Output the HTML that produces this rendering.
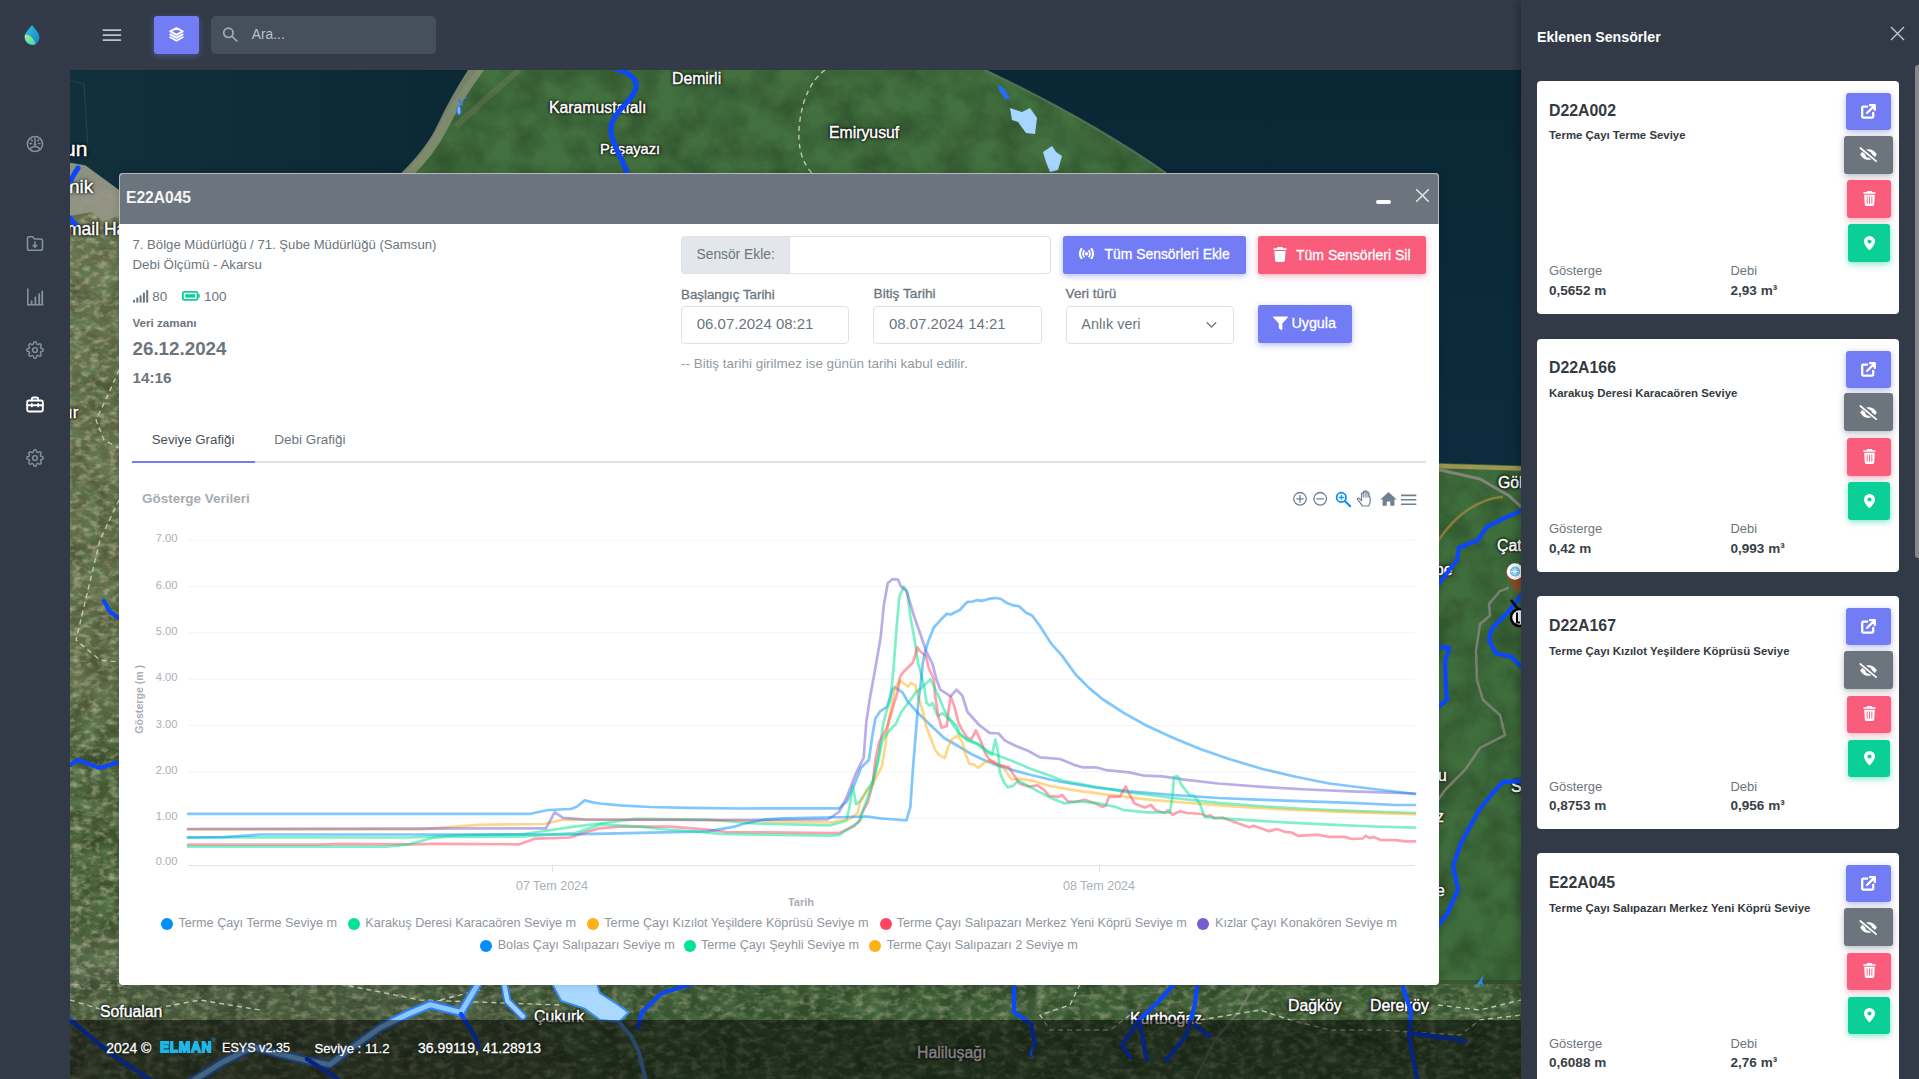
<!DOCTYPE html>
<html lang="tr">
<head>
<meta charset="utf-8">
<title>ESYS</title>
<style>
*{box-sizing:border-box;margin:0;padding:0}
html,body{width:1919px;height:1079px;overflow:hidden;background:#313a46}
body{position:relative;font-family:"Liberation Sans",sans-serif;color:#6c757d;font-size:13.3px}
.abs{position:absolute}
.t{position:absolute;white-space:nowrap;line-height:1}
#map{position:absolute;left:70px;top:70px;width:1451px;height:1009px;overflow:hidden;background:#3f6a40}
#sidebar{position:absolute;left:0;top:0;width:70px;height:1079px;background:#313a46}
#topbar{position:absolute;left:70px;top:0;width:1451px;height:70px;background:#333b48}
#footer{position:absolute;left:70px;top:1020px;width:1451px;height:59px;background:rgba(0,0,0,.5)}
#panel{position:absolute;left:1521px;top:0;width:398px;height:1079px;background:#313a46;box-shadow:-3px 0 8px rgba(0,0,0,.25)}
#modal{position:absolute;left:119px;top:173px;width:1320px;height:812px;background:#fff;border-radius:4px;overflow:hidden;box-shadow:0 0 10px rgba(0,0,0,.15)}
#mhead{position:absolute;left:0;top:0;width:1320px;height:50.6px;background:#6c757d}
.lbl{position:absolute;white-space:nowrap;color:#fff;font-weight:400;-webkit-text-stroke:.45px #fff;line-height:1;text-shadow:0 0 1.5px #000,0 0 2px #000,0 0 3px #000,0 0 4px rgba(0,0,0,.7)}
.ft{color:#fff;-webkit-text-stroke:.28px #fff;text-shadow:0 0 3px rgba(0,0,0,.9)}
.card{position:absolute;left:16px;width:362px;height:233px;background:#fff;border-radius:4px}
.cb{position:absolute;border-radius:3px;height:37.7px}
.cb svg{position:absolute;left:50%;top:50%}
.c1{left:309px;top:12px;width:45px;height:37px;background:#727cf5;box-shadow:0 2px 6px rgba(114,124,245,.5)}
.c2{left:307px;top:54.800px;width:49px;height:38px;background:#6c757d;box-shadow:0 2px 6px rgba(108,117,125,.5)}
.c3{left:310px;top:99.300px;width:44px;background:#fa5c7c;box-shadow:0 2px 6px rgba(250,92,124,.5)}
.c4{left:311px;top:143.300px;width:42px;background:#0acf97;box-shadow:0 2px 6px rgba(10,207,151,.5)}
.ct{left:12px;top:22px;font-size:15.8px;font-weight:700;color:#343a40}
.cs{left:12px;top:48px;font-size:11.5px;font-weight:700;color:#343a40}
.cl{top:183px;font-size:13px;color:#6c757d}
.cv{top:203px;font-size:13.5px;font-weight:700;color:#343a40}
.leg{position:absolute;white-space:nowrap;font-size:12.65px;color:#8f969e;line-height:1}
.dot{position:absolute;width:12px;height:12px;border-radius:50%}
.yl{position:absolute;left:30px;width:28px;text-align:right;font-size:11px;color:#adb5bd;line-height:1}
</style>
</head>
<body>
<div id="map">
<svg width="1451" height="1009" viewBox="70 70 1451 1009" style="position:absolute;left:0;top:0">
<defs>
<filter id="nz" x="0" y="0" width="100%" height="100%">
<feTurbulence type="fractalNoise" baseFrequency="0.035" numOctaves="4" seed="7" result="n"/>
<feColorMatrix type="matrix" values="0 0 0 0 0  0 0 0 0 0  0 0 0 0 0  1.6 0 0 0 -0.55"/>
</filter>
<filter id="nz2" x="0" y="0" width="100%" height="100%">
<feTurbulence type="fractalNoise" baseFrequency="0.06" numOctaves="3" seed="3"/>
<feColorMatrix type="matrix" values="0 0 0 0 0.12  0 0 0 0 0.22  0 0 0 0 0.1  2.2 0 0 0 -0.9"/>
</filter>
<linearGradient id="seaL" x1="0" y1="0" x2="1" y2="0"><stop offset="0" stop-color="#122f3c"/><stop offset="1" stop-color="#0a2935"/></linearGradient>
<linearGradient id="seaR" x1="0" y1="0" x2="0" y2="1"><stop offset="0" stop-color="#0a2734"/><stop offset="1" stop-color="#0c2c3d"/></linearGradient>
<linearGradient id="leftL" x1="0" y1="0" x2="0" y2="1"><stop offset="0" stop-color="#6c7650"/><stop offset=".3" stop-color="#647049"/><stop offset=".62" stop-color="#616c47"/><stop offset=".7" stop-color="#4a6238"/><stop offset=".9" stop-color="#466036"/><stop offset="1" stop-color="#5d6a50"/></linearGradient>
<linearGradient id="blf" x1="0" y1="0" x2="1" y2="0"><stop offset="0" stop-color="#4a5a3c"/><stop offset=".6" stop-color="#46573a" stop-opacity=".9"/><stop offset="1" stop-color="#3a5a33" stop-opacity="0"/></linearGradient>
<filter id="nz3" x="0" y="0" width="100%" height="100%"><feTurbulence type="fractalNoise" baseFrequency="0.11 0.16" numOctaves="3" seed="11"/><feColorMatrix type="matrix" values="0 0 0 0 0.66  0 0 0 0 0.6  0 0 0 0 0.42  2.4 0 0 0 -1.05"/></filter>
</defs>
<!-- land base -->
<rect x="70" y="70" width="1451" height="1009" fill="#3f6b41"/>
<!-- northern plain lighter -->
<path d="M400 70H1000L1170 175H380Z" fill="#42703f"/>
<!-- left mountain strip -->
<rect x="70" y="190" width="60" height="800" fill="url(#leftL)"/>
<!-- right strip land -->
<rect x="1430" y="455" width="91" height="570" fill="#3f6e3d"/>
<!-- bottom strip -->
<rect x="70" y="980" width="1451" height="99" fill="#3a5a33"/>
<rect x="70" y="980" width="700" height="99" fill="url(#blf)"/>
<!-- dark patches -->
<rect x="70" y="70" width="1451" height="1009" filter="url(#nz)" opacity=".28"/>
<rect x="70" y="190" width="60" height="900" filter="url(#nz2)" opacity=".75"/>
<rect x="70" y="984" width="1451" height="95" filter="url(#nz2)" opacity=".5"/>
<rect x="70" y="190" width="60" height="800" filter="url(#nz3)" opacity=".55"/>
<rect x="70" y="984" width="1451" height="95" filter="url(#nz3)" opacity=".4"/>
<!-- seas -->
<path d="M70 70H477Q452 100 438 128T400 176L119 176V190L105 179.700L85.500 165.400L70 162.800Z" fill="url(#seaL)"/>
<path d="M468 70H484Q462 100 448 128T410 178H396Q426 150 438 124T468 70Z" fill="#8a9276" opacity=".85"/><path d="M519 70Q490 95 456 126" fill="none" stroke="#8c8a64" stroke-width="6" opacity=".28"/>
<path d="M985 70H1521V465.500L1438 463V173H1166Q1090 120 985 70Z" fill="url(#seaR)"/>
<path d="M985 70Q1090 120 1166 173" fill="none" stroke="#5d7a5c" stroke-width="2" opacity=".8"/>
<path d="M1438 466L1521 468.500" stroke="#a89a55" stroke-width="4.500" opacity=".9"/>

<!-- urban area left -->
<path d="M70 162.800L85.500 165.400L105 179.700L119 190V215L104 222L92 212L70 216Z" fill="#97978a" opacity=".9"/>
<path d="M70 80L84 84L88 150" fill="none" stroke="#24404a" stroke-width="1.2"/>
<!-- roads -->
<path d="M1438 469.500L1480 479L1509 495.600L1521 506.700" fill="none" stroke="#8d8b84" stroke-width="3" opacity=".85"/>
<path d="M1438 541Q1452 520 1469 509T1503 496.700" fill="none" stroke="#a68a3a" stroke-width="2.500" opacity=".75"/>
<path d="M1509 587.800L1500 591L1489 604L1490 615.600L1480 624L1476 651L1477 680L1483 700L1500 715L1505 735L1480 748L1465 770L1445 790L1438 800" fill="none" stroke="#8f8a85" stroke-width="2.500" opacity=".75"/>
<path d="M1255 984L1240 1010L1215 1040L1195 1079" fill="none" stroke="#7d7a78" stroke-width="2.5" opacity=".7"/>
<!-- dashed boundaries -->
<g fill="none" stroke="#d9dfc8" stroke-width="1.4" stroke-dasharray="5 4" opacity=".8">
<path d="M825 70Q805 85 800 120T812 173"/>
<path d="M119 370L108 395L96 420L104 440L119 448"/>
<path d="M119 500L100 540L88 590L76 640L100 660L119 662"/>
<path d="M70 1000L120 1015L200 1000L260 1010"/>
<path d="M400 1020L440 1000L480 990"/>
<path d="M1080 984L1070 1005L1040 1015L1050 1030L1110 1030L1130 1015L1175 1015"/>
<path d="M1200 1020L1260 1010L1290 1020L1330 1030L1380 1030L1460 1035L1480 1020L1521 1015"/>
<path d="M1438 1005L1480 1010L1521 1000"/>
<path d="M340 984L420 1000L560 1005"/>
</g>
</svg>
<div class="lbl" style="left:602.0px;top:1.0px;font-size:15.8px">Demirli</div>
<div class="lbl" style="left:479.0px;top:30.0px;font-size:15.8px">Karamustafalı</div>
<div class="lbl" style="left:530.0px;top:72.0px;font-size:14.6px">Paşayazı</div>
<div class="lbl" style="left:759.0px;top:55.0px;font-size:15.8px">Emiryusuf</div>
<div class="lbl" style="left:-6.0px;top:68.0px;font-size:21.0px">un</div>
<div class="lbl" style="left:-1.0px;top:107.0px;font-size:19.0px">nik</div>
<div class="lbl" style="left:-3.0px;top:151.0px;font-size:17.5px">mail Ha</div>
<div class="lbl" style="left:-2.0px;top:334.0px;font-size:17.0px">ır</div>
<div class="lbl" style="left:30.0px;top:934.0px;font-size:15.8px">Sofualan</div>
<div class="lbl" style="left:464.0px;top:939.0px;font-size:15.8px">Çukurk</div>
<div class="lbl" style="left:847.0px;top:975.0px;font-size:15.8px">Haliluşağı</div>
<div class="lbl" style="left:1060.0px;top:941.0px;font-size:15.8px">Kurtboğaz</div>
<div class="lbl" style="left:1218.0px;top:928.0px;font-size:15.8px">Dağköy</div>
<div class="lbl" style="left:1300.0px;top:928.0px;font-size:15.8px">Dereköy</div>
<div class="lbl" style="left:1428.0px;top:405.4px;font-size:15.8px">Göl</div>
<div class="lbl" style="left:1427.0px;top:467.6px;font-size:15.8px">Çat</div>
<div class="lbl" style="left:1365.0px;top:492.0px;font-size:15.8px">pe</div>
<div class="lbl" style="left:1368.0px;top:698.0px;font-size:15.8px">u</div>
<div class="lbl" style="left:1366.0px;top:739.0px;font-size:15.8px">z</div>
<div class="lbl" style="left:1366.0px;top:813.0px;font-size:15.8px">e</div>
<div class="lbl" style="left:1441.0px;top:709.0px;font-size:15.8px">S</div>
<svg width="1451" height="1009" viewBox="70 70 1451 1009" style="position:absolute;left:0;top:0">
<!-- reservoir -->
<g fill="none" stroke-linejoin="round" stroke-linecap="round">
<path id="rv" d="M191 1082L222 1062.500L252.800 1047L276 1053L306.800 1060.600L330 1064.500L353 1047L380 1027.800L407 1014.400L430.200 1004.700L445.600 1008.600L461 1012.400L472.600 993L480.400 980" stroke="#2f7df0" stroke-width="9"/>
<path d="M191 1082L222 1062.500L252.800 1047L276 1053L306.800 1060.600L330 1064.500L353 1047L380 1027.800L407 1014.400L430.200 1004.700L445.600 1008.600L461 1012.400L472.600 993L480.400 980" stroke="#8cc8fb" stroke-width="5"/>
<path d="M503.500 980L507.400 1001L522.800 1016.300" stroke="#2f7df0" stroke-width="8"/>
<path d="M503.500 980L507.400 1001L522.800 1016.300" stroke="#9fd2fd" stroke-width="4.500"/>
<path d="M619 1022L630.800 1035.600L638.500 1051L646.200 1082" stroke="#4f8fd8" stroke-width="4"/>
</g>
<path d="M549.800 980L561.300 1001L584.500 1008.600L600 1020L619.200 1022L628.800 1012.400L615.300 1002.800L600 993L596 980Z" fill="#a9d9ff" stroke="#3a8cf0" stroke-width="2"/>
<!-- rivers -->
<g fill="none" stroke="#0c47fa" stroke-width="4.300" stroke-linecap="round" stroke-linejoin="round">
<path d="M614 68C628 72 638 78 636 88C634 100 612 112 611 128C610 142 622 156 628 176" stroke-width="5.200"/>
<path d="M70 182Q74 174 78 168" stroke-width="5"/><path d="M70 218L75 224" stroke-width="5"/>
<path d="M104 601L110 612L119 618"/>
<path d="M70 765L78 760L100 768L119 762"/>
<path d="M68 1018L110 1053L149 1079"/>
<path d="M461 1014L475 1036L478 1047"/>
<path d="M307 1059L338 1079"/>
<path d="M692 984L662 993L642 1012L638 1028"/>
<path d="M1014 984L1014 1012L1031 1024L1035 1043L1030 1055"/>
<path d="M1174 984L1159 1001L1139 1020L1122 1045L1130 1057M1139 1020L1147 1060"/>
<path d="M1197 984L1195 1005L1186 1036L1166 1060M1195 1025L1209 1036"/>
<path d="M1402 984L1411 1012L1409 1036L1417 1079M1409 1033L1440 1037L1465 1041"/>
<path d="M1438 585L1457 560L1459 547.800L1478 540L1487 526.700L1502.700 518.900L1521 511"/>
<path d="M1521 595.600L1509 611L1491.600 629L1489 640L1496 653.300L1511.600 656.700L1521 666.700"/>
<path d="M1438 646.700L1449 647.800L1445 662L1446 690L1447 700L1438 707"/>
<path d="M1521 781L1503 782L1491 795L1479 810L1461 843L1453 866L1458 890L1447 914L1438 926"/>
</g>
<!-- small lakes -->
<path d="M1010 108L1022 112L1030 108L1037 118L1035 134L1026 133L1018 122L1012 120Z" fill="#a6d6ff"/>
<path d="M1043 152L1052 146L1056 152L1062 156L1058 170L1050 172L1046 162Z" fill="#a6d6ff"/>
<path d="M997 84L1004 88L1010 98L1006 100L1000 92Z" fill="#2a6cf0"/>
<path d="M457 108q2-5 3.500 0t-1 6.500-2.500-6.500z" fill="#7fb6ff" stroke="#2a6cf5" stroke-width="1"/><path d="M459 98l4 6 -1 2-4-5zM464 95l3 3-1 1.500z" fill="#3a7cf5"/>
<path d="M1480 980l4 -6 -2 8 3 6 -4 -4 -5 2z" fill="#2a8cf0"/>
<path d="M1030 1052l3-6-1 8 2 5-4-4z" fill="#2a8cf0"/>
<!-- markers -->
<path d="M1505.300 574a9.800 9.800 0 1 1 19.400 2l-7.700 18.400z" fill="#8a4a26"/><circle cx="1515" cy="571.500" r="8.300" fill="#fff"/><circle cx="1515" cy="571.500" r="5" fill="#5cc0ee"/><path d="M1511 571.500h8M1515 567.500v8M1512.200 568.700l5.600 5.600M1517.800 568.700l-5.600 5.600" stroke="#fff" stroke-width="1"/>
<path d="M1511 600l7 9" stroke="#000" stroke-width="2.500"/><circle cx="1519.500" cy="617.500" r="8.500" fill="#fff" stroke="#000" stroke-width="2.600"/><path d="M1517 612.500v10h3" fill="none" stroke="#000" stroke-width="2"/>
</svg>
</div>
<div id="topbar">
<svg class="abs" style="left:32px;top:28px" width="20" height="14" viewBox="0 0 20 14"><path d="M0.7 2h18.4M0.7 7.1h18.4M0.7 12.2h18.4" stroke="#b9c0cb" stroke-width="1.75"/></svg>
<div class="abs" style="left:84px;top:16px;width:45px;height:38px;background:#727cf5;border-radius:3px;box-shadow:0 2px 6px rgba(114,124,245,.4)">
<svg class="abs" style="left:14px;top:9.500px" width="17" height="17" viewBox="0 0 24 24" fill="none" stroke="#fff" stroke-width="2.700" stroke-linejoin="round" stroke-linecap="round"><path d="M12 2.800L3.200 7.700l8.800 4.900 8.800-4.900z"/><path d="M3.200 11.900l8.800 4.900 8.800-4.900"/><path d="M3.200 15.900l8.800 4.900 8.800-4.900"/></svg>
</div>
<div class="abs" style="left:141px;top:16px;width:225px;height:38px;background:#46505c;border-radius:5px">
<svg class="abs" style="left:11px;top:10px" width="17" height="17" viewBox="0 0 17 17" fill="none" stroke="#a3abb6" stroke-width="1.700" stroke-linecap="round"><circle cx="6.400" cy="6.800" r="4.700"/><path d="M10 10.400L14.800 15"/></svg>
<div class="t" style="left:40.800px;top:12.300px;font-size:13.800px;color:#bac1cb">Ara...</div>
</div>
</div>
<div id="sidebar">
<svg class="abs" style="left:23px;top:24px" width="18" height="22" viewBox="0 0 18 22"><defs><linearGradient id="dg" x1="0" y1="0" x2="1" y2="1"><stop offset="0" stop-color="#35c3e6"/><stop offset="1" stop-color="#1581bd"/></linearGradient><linearGradient id="lg" x1="0" y1="0" x2="1" y2="1"><stop offset="0" stop-color="#b5f08a"/><stop offset="1" stop-color="#39d6b0"/></linearGradient></defs><path d="M9 1C12 5 16.500 8.500 16.500 13.500A7.500 7.500 0 0 1 9 21 7.500 7.500 0 0 1 1.500 13.500C1.500 8.500 6 5 9 1z" fill="url(#dg)"/><path d="M2 10.500C6.500 11 11 13.500 12.500 20.500 6 21.500 1 17.500 2 10.500z" fill="url(#lg)"/></svg>
<!-- dashboard -->
<svg class="abs" style="left:26px;top:134.500px" width="18" height="18" viewBox="0 0 18 18" fill="none" stroke="#8391a2" stroke-width="1.5" stroke-linecap="round"><circle cx="9" cy="9" r="7.600"/><path d="M9 3.200v5.800M4 8.500h1.500M12.500 8.500H14M5.300 4.800l1 1M12.700 4.800l-1 1M4.200 13.600Q9 9.500 13.800 13.600"/><circle cx="9" cy="9.500" r="1.300" fill="#8391a2" stroke="none"/></svg>
<!-- folder download -->
<svg class="abs" style="left:26px;top:235px" width="18" height="17" viewBox="0 0 18 17" fill="none" stroke="#8391a2" stroke-width="1.600" stroke-linejoin="round" stroke-linecap="round"><path d="M1.500 3.200a1.500 1.500 0 0 1 1.500-1.500h3.600l2 2.300h6.400a1.500 1.500 0 0 1 1.500 1.500v8.300a1.500 1.500 0 0 1-1.500 1.500H3a1.500 1.500 0 0 1-1.500-1.500z"/><path d="M9 7v5M7 10.200l2 2 2-2" stroke-width="1.500"/></svg>
<!-- bar chart -->
<svg class="abs" style="left:26px;top:288px" width="18" height="18" viewBox="0 0 18 18" fill="none" stroke="#8391a2" stroke-width="1.600" stroke-linecap="round"><path d="M1.800 1v15.800H17"/><path d="M5.600 13.200v3M9.400 9.500v6.700M13.200 6.200v10M16.200 3.500v12.500" stroke-width="1.800"/></svg>
<!-- gear -->
<svg class="abs" style="left:26px;top:341px" width="18" height="18" viewBox="0 0 24 24" fill="none" stroke="#8391a2" stroke-width="1.900" stroke-linejoin="round"><circle cx="12" cy="12" r="3.200"/><path d="M19.400 15a1.650 1.650 0 0 0 .33 1.820l.06.060a2 2 0 1 1-2.830 2.830l-.06-.06a1.650 1.650 0 0 0-1.820-.33 1.650 1.650 0 0 0-1 1.510V21a2 2 0 0 1-4 0v-.09A1.650 1.650 0 0 0 9 19.400a1.650 1.650 0 0 0-1.820.33l-.06.060a2 2 0 1 1-2.830-2.830l.06-.06a1.650 1.650 0 0 0 .33-1.820 1.650 1.650 0 0 0-1.510-1H3a2 2 0 0 1 0-4h.09A1.650 1.650 0 0 0 4.600 9a1.650 1.650 0 0 0-.33-1.820l-.06-.06a2 2 0 1 1 2.830-2.830l.06.060a1.650 1.650 0 0 0 1.820.33H9a1.650 1.650 0 0 0 1-1.510V3a2 2 0 0 1 4 0v.09a1.650 1.650 0 0 0 1 1.510 1.650 1.650 0 0 0 1.820-.33l.06-.06a2 2 0 1 1 2.830 2.830l-.06.060a1.650 1.650 0 0 0-.33 1.820V9a1.650 1.650 0 0 0 1.510 1H21a2 2 0 0 1 0 4h-.09a1.650 1.650 0 0 0-1.510 1z"/></svg>
<!-- toolbox -->
<svg class="abs" style="left:26px;top:395.500px" width="18" height="17" viewBox="0 0 18 17" fill="none" stroke="#fff" stroke-width="1.900" stroke-linejoin="round" stroke-linecap="round"><path d="M5.800 4.500V3a1.500 1.500 0 0 1 1.500-1.500h3.400A1.500 1.500 0 0 1 12.200 3v1.500"/><rect x="1.200" y="4.500" width="15.600" height="11" rx="1.800"/><path d="M1.200 9.200h15.600M5.800 8v2.400M12.200 8v2.400"/></svg>
<!-- gear 2 -->
<svg class="abs" style="left:26px;top:449px" width="18" height="18" viewBox="0 0 24 24" fill="none" stroke="#8391a2" stroke-width="1.900" stroke-linejoin="round"><circle cx="12" cy="12" r="3.200"/><path d="M19.400 15a1.650 1.650 0 0 0 .33 1.820l.06.060a2 2 0 1 1-2.830 2.830l-.06-.06a1.650 1.650 0 0 0-1.820-.33 1.650 1.650 0 0 0-1 1.510V21a2 2 0 0 1-4 0v-.09A1.650 1.650 0 0 0 9 19.400a1.650 1.650 0 0 0-1.820.33l-.06.060a2 2 0 1 1-2.830-2.830l.06-.06a1.650 1.650 0 0 0 .33-1.820 1.650 1.650 0 0 0-1.510-1H3a2 2 0 0 1 0-4h.09A1.650 1.650 0 0 0 4.600 9a1.650 1.650 0 0 0-.33-1.820l-.06-.06a2 2 0 1 1 2.830-2.830l.06.060a1.650 1.650 0 0 0 1.820.33H9a1.650 1.650 0 0 0 1-1.510V3a2 2 0 0 1 4 0v.09a1.650 1.650 0 0 0 1 1.510 1.650 1.650 0 0 0 1.820-.33l.06-.06a2 2 0 1 1 2.830 2.830l-.06.060a1.650 1.650 0 0 0-.33 1.820V9a1.650 1.650 0 0 0 1.510 1H21a2 2 0 0 1 0 4h-.09a1.650 1.650 0 0 0-1.510 1z"/></svg>
</div>
<div id="footer">
<div class="t ft" style="left:36.300px;top:21.800px;font-size:13.900px">2024 ©</div>
<div class="t" style="left:90px;top:19px;font-size:15.500px;font-weight:700;color:#1fb6e8;letter-spacing:.8px;-webkit-text-stroke:1.800px #1fb6e8;transform:scaleX(.88);transform-origin:left">ELMAN</div>
<div class="t" style="left:141.500px;top:17px;font-size:6px;color:#1fb6e8">®</div>
<div class="t ft" style="left:152px;top:22.400px;font-size:12.600px">ESYS v2.35</div>
<div class="t ft" style="left:244.500px;top:22.200px;font-size:13.150px">Seviye : 11.2</div>
<div class="t ft" style="left:348px;top:21.800px;font-size:13.950px">36.99119, 41.28913</div>
</div>
<div id="modal">
<div id="mhead"></div>
<div class="t" style="left:7.0px;top:17.4px;font-size:15.6px;font-weight:700;color:#f4f5f6;">E22A045</div>
<div class="abs" style="left:1257.0px;top:26.6px;width:15.2px;height:4.8px;background:#fff;border-radius:2px"></div>
<svg class="abs" style="left:1296px;top:15px" width="15" height="15" viewBox="0 0 15 15"><path d="M1.200 1.200L13.800 13.800M13.800 1.200L1.200 13.800" stroke="#e4e7ea" stroke-width="1.500"/></svg>
<div class="t" style="left:13.5px;top:64.8px;font-size:13.15px;font-weight:400;color:#6c757d;">7. Bölge Müdürlüğü / 71. Şube Müdürlüğü (Samsun)</div>
<div class="t" style="left:13.5px;top:84.9px;font-size:13.3px;font-weight:400;color:#6c757d;">Debi Ölçümü - Akarsu</div>
<svg class="abs" style="left:13.5px;top:116.5px" width="16" height="13" viewBox="0 0 16 13"><g fill="#6c757d"><rect x="0" y="9.800" width="2" height="3" rx=".8"/><rect x="3.300" y="7.600" width="2" height="5.200" rx=".8"/><rect x="6.600" y="5.200" width="2" height="7.600" rx=".8"/><rect x="9.900" y="2.600" width="2" height="10.200" rx=".8"/><rect x="13.200" y="0" width="2" height="12.800" rx=".8"/></g></svg>
<div class="t" style="left:33.3px;top:116.8px;font-size:13.5px;font-weight:400;color:#6c757d;">80</div>
<svg class="abs" style="left:63.4px;top:118.2px" width="18" height="10" viewBox="0 0 18 10"><rect x=".9" y=".9" width="14.600" height="8" rx="1.600" fill="none" stroke="#0acf97" stroke-width="1.800"/><rect x="3.200" y="3.200" width="10" height="3.400" fill="#0acf97"/><rect x="16" y="3" width="1.700" height="3.800" rx=".6" fill="#0acf97"/></svg>
<div class="t" style="left:85.0px;top:116.8px;font-size:13.5px;font-weight:400;color:#6c757d;">100</div>
<div class="t" style="left:13.5px;top:144.2px;font-size:11.63px;font-weight:700;color:#6c757d;">Veri zamanı</div>
<div class="t" style="left:13.5px;top:167.0px;font-size:18.8px;font-weight:700;color:#6c757d;">26.12.2024</div>
<div class="t" style="left:13.5px;top:196.9px;font-size:15.25px;font-weight:700;color:#6c757d;">14:16</div>
<div class="abs" style="left:562.0px;top:63.0px;width:370.0px;height:38.0px;border:1px solid #dee2e6;border-radius:4px;background:#fff"></div>
<div class="abs" style="left:562.0px;top:63.0px;width:109.0px;height:38.0px;background:#e3e7eb;border:1px solid #dee2e6;border-radius:4px 0 0 4px"></div>
<div class="t" style="left:577.5px;top:74.6px;font-size:13.81px;font-weight:400;color:#6c757d;">Sensör Ekle:</div>
<div class="abs" style="left:944.0px;top:63.0px;width:183.0px;height:38.0px;background:#727cf5;border-radius:2.500px;box-shadow:0 2px 6px rgba(114,124,245,.5)"></div>
<svg class="abs" style="left:959px;top:75px" width="17" height="11.400" viewBox="0 0 17 11.400" fill="none" stroke="#fff" stroke-linecap="round"><circle cx="8.500" cy="5.700" r="1.750" fill="#fff" stroke="none"/><path d="M3.400 1Q.6 5.700 3.400 10.400M13.600 1Q16.400 5.700 13.600 10.400" stroke-width="2.200"/><path d="M6 2.700Q4.200 5.700 6 8.700M11 2.700Q12.800 5.700 11 8.700" stroke-width="1.700"/></svg>
<div class="t" style="left:985.5px;top:74.8px;font-size:13.92px;font-weight:400;color:#fff;-webkit-text-stroke:.3px #fff">Tüm Sensörleri Ekle</div>
<div class="abs" style="left:1139.0px;top:63.0px;width:168.0px;height:38.0px;background:#fa5c7c;border-radius:2.500px;box-shadow:0 2px 6px rgba(250,92,124,.5)"></div>
<svg class="abs" style="left:1153.5px;top:73.5px" width="14" height="15" viewBox="0 0 14 15" fill="#fff"><path d="M4.500 0h5l.8 1.300H13.500v1.700H.5V1.300H3.700z"/><path d="M1.400 4h11.200l-.7 9.600a1.500 1.500 0 0 1-1.500 1.400H3.600a1.500 1.500 0 0 1-1.500-1.400z"/></svg>
<div class="t" style="left:1177.0px;top:74.7px;font-size:14.03px;font-weight:400;color:#fff;-webkit-text-stroke:.3px #fff">Tüm Sensörleri Sil</div>
<div class="t" style="left:562.0px;top:114.5px;font-size:13.32px;font-weight:400;color:#6c757d;-webkit-text-stroke:.3px #6c757d">Başlangıç Tarihi</div>
<div class="t" style="left:754.6px;top:114.2px;font-size:13.68px;font-weight:400;color:#6c757d;-webkit-text-stroke:.3px #6c757d">Bitiş Tarihi</div>
<div class="t" style="left:946.6px;top:114.3px;font-size:13.6px;font-weight:400;color:#6c757d;-webkit-text-stroke:.3px #6c757d">Veri türü</div>
<div class="abs" style="left:562.0px;top:133.0px;width:167.5px;height:38.0px;border:1px solid #dee2e6;border-radius:4px;background:#fff"></div>
<div class="abs" style="left:754.0px;top:133.0px;width:169.0px;height:38.0px;border:1px solid #dee2e6;border-radius:4px;background:#fff"></div>
<div class="abs" style="left:947.0px;top:133.0px;width:168.0px;height:38.0px;border:1px solid #dee2e6;border-radius:4px;background:#fff"></div>
<div class="t" style="left:577.7px;top:143.1px;font-size:15.0px;font-weight:400;color:#6c757d;">06.07.2024 08:21</div>
<div class="t" style="left:769.9px;top:143.1px;font-size:15.0px;font-weight:400;color:#6c757d;">08.07.2024 14:21</div>
<div class="t" style="left:962.3px;top:143.6px;font-size:14.4px;font-weight:400;color:#6c757d;">Anlık veri</div>
<svg class="abs" style="left:1087px;top:147.5px" width="11" height="8" viewBox="0 0 11 8" fill="none" stroke="#6c757d" stroke-width="1.300" stroke-linecap="round" stroke-linejoin="round"><path d="M1.200 1.800L5.500 6l4.300-4.200"/></svg>
<div class="abs" style="left:1139.0px;top:132.0px;width:94.0px;height:38.0px;background:#727cf5;border-radius:2.500px;box-shadow:0 2px 6px rgba(114,124,245,.5)"></div>
<svg class="abs" style="left:1153.5px;top:143px" width="15" height="15" viewBox="0 0 15 15" fill="#fff"><path d="M.6.400h13.800c.5 0 .8.600.4 1L9.300 7.600v6c0 .5-.6.800-1 .5l-2.200-1.600a.7.700 0 0 1-.300-.5V7.600L.2 1.400C-.2 1 .1.400.6.400z"/></svg>
<div class="t" style="left:1172.4px;top:143.4px;font-size:14.33px;font-weight:400;color:#fff;-webkit-text-stroke:.3px #fff">Uygula</div>
<div class="t" style="left:562.0px;top:184.2px;font-size:13.45px;font-weight:400;color:#919aa3;">-- Bitiş tarihi girilmez ise günün tarihi kabul edilir.</div>
<div class="abs" style="left:13.0px;top:287.5px;width:1294.0px;height:2.0px;background:#dee2e6"></div>
<div class="abs" style="left:13.0px;top:287.5px;width:122.7px;height:2.0px;background:#727cf5"></div>
<div class="t" style="left:32.7px;top:259.8px;font-size:13.29px;font-weight:400;color:#495057;">Seviye Grafiği</div>
<div class="t" style="left:155.3px;top:259.6px;font-size:13.5px;font-weight:400;color:#6c757d;">Debi Grafiği</div>
<div class="t" style="left:23.0px;top:318.9px;font-size:13.46px;font-weight:700;color:#a6abb1;">Gösterge Verileri</div>
<svg class="abs" style="left:0;top:0" width="1320" height="811" viewBox="119 173 1320 811">
<path d="M188 540.3H1415" stroke="#f3f4f7" stroke-width="1"/>
<path d="M188 586.6H1415" stroke="#f3f4f7" stroke-width="1"/>
<path d="M188 632.9H1415" stroke="#f3f4f7" stroke-width="1"/>
<path d="M188 679.2H1415" stroke="#f3f4f7" stroke-width="1"/>
<path d="M188 725.5H1415" stroke="#f3f4f7" stroke-width="1"/>
<path d="M188 771.8H1415" stroke="#f3f4f7" stroke-width="1"/>
<path d="M188 818.1H1415" stroke="#f3f4f7" stroke-width="1"/>
<path d="M188 865.5H1415" stroke="#dfe2e6" stroke-width="1"/>
<path d="M552.5 866v6M1099.5 866v6" stroke="#dfe2e6" stroke-width="1"/>
<g fill="none" stroke-width="2.7" stroke-linejoin="round" stroke-linecap="round" stroke-opacity=".5">
<polyline stroke="#008FFB" points="188,813.8 530.8,813.8 548,810 571,809 577,806.5 584.7,800.4 592.7,802.4 600,803.5 620,805.4 650,807 689,807.9 740,808.5 839,808.3 846.9,801.5 853.3,787.3 861,767.8 868.9,760 872.8,732.8 875.4,718.5 880,711.4 887,706.9 892.3,690 894.9,687.1 902.6,692.6 907.8,701.7 918.2,713.3 931.2,725.7 944.1,738 959.7,747 972.7,754.8 985.6,760.7 998.6,765.9 1011.6,769.8 1031,775 1050,779.5 1062,782 1095.6,787.5 1129,791.3 1173.5,795 1218,798 1262.5,799.8 1307,801.3 1351.5,802.9 1396,805 1415,805"/>
<polyline stroke="#00E396" points="188,837.5 300,837.3 409,837.5 466.6,835.2 524,834 576,826.3 600,823.5 636,818.8 707,819.5 754.5,823.5 829.5,825.4 846.4,820.7 849.5,806.7 852.7,786 856,804 859.8,801.5 865,793.8 872.8,780.8 879.3,752.3 883.2,723.7 887,709.5 890.3,700 893.6,667.7 896.8,624.9 899.4,596.3 903.9,586.6 907.2,592.4 910.4,617 914.3,637.8 918.2,663.8 920.8,672.8 924.7,689.7 926.6,703 929.9,705.6 932.5,703 937.7,716 942.8,713.3 950.6,721 958.4,732.8 967.5,740.6 979.2,744.5 989.5,752.3 1011.6,760.7 1031,769 1050,775.6 1062,780.6 1095.6,786.9 1129,792.4 1173.5,798 1218,802.9 1262.5,806.4 1307,809 1351.5,810.9 1415,813"/>
<polyline stroke="#FEB019" points="188,829.3 420,829.3 478,824.8 544,824 563,819.7 670,819.5 829.5,822.5 850,818.8 857.7,813 859.8,802.8 866.3,791.2 871.5,786 881.9,766.5 885.8,741.9 888.4,722.4 892.3,703 894.9,688.4 900,680.6 907.8,686.5 911,683.2 915.6,685.2 916.9,692.3 919.5,700.4 923.4,713.3 926,726.3 931.2,739.3 935,749.7 939,754.9 944.8,758 948,747 952,739.3 957.8,735.4 962.3,741.9 964.9,752.3 969.4,763.9 974,764.6 978.5,767.8 984.3,762.6 990.8,760 1002.5,766.5 1011.6,779.5 1020.7,778.8 1032.3,780.8 1050,786 1073.4,790.2 1106.7,794.6 1151,799.8 1195.7,803.5 1240,806.9 1284.7,809.5 1329,811.3 1373.7,812.9 1415,814.2"/>
<polyline stroke="#FF4560" points="188,844.6 317.6,844.6 340.5,843.9 409,844.3 432,843.9 519.4,844.3 535.4,838.6 570,837.5 583.6,832.9 599.6,828.3 620,826.7 670,826.7 707.6,829.7 726,832 839,833.2 854,826.3 859.6,820.7 861,814.5 867.6,802.8 872.8,783.4 875.4,760 879.3,741.9 887,727.6 892.3,709.5 897.4,692.6 900,676.7 903.9,671.5 913,662.5 915,656 917.2,647.2 920.8,652 926,656 928.6,667.7 933.8,679.3 935,694 937.7,713.3 941.5,727.6 946.7,726.3 948.7,709.5 950.6,696.5 954.5,706.9 958.4,722.4 962.3,730.2 967.5,738 971.4,739.3 975.9,730.2 980.5,740.6 985.6,753.6 989.5,760 998.6,765.2 1009,767.2 1014.2,775.6 1019.4,783.4 1028.5,786.6 1037.5,785.3 1044,789.9 1049,795.8 1057.8,796.9 1062,795 1067.8,801.3 1075.6,802 1084.5,799.8 1095.6,803.5 1102.3,806.9 1105.6,805.8 1109,796.9 1120,796.4 1125.6,786.4 1129,793.5 1134.5,803.5 1144.6,807.5 1151,805 1155.7,810.2 1164.6,813 1168,810.2 1172.4,814.7 1180,811.3 1186.8,813 1202.4,814 1205.7,816.2 1210,815.3 1214.6,818.4 1222.4,817.5 1235.8,822.4 1249,827.3 1253.6,825.8 1269,831.3 1277,829 1284.7,831.8 1291.4,832.5 1298,835.8 1318,834.7 1329,836.9 1344.8,836.9 1351.5,839 1362.6,838.5 1366,835.8 1369.3,838 1373.7,836.9 1380.4,839.8 1396,840.2 1404.8,841.4 1415,841.4"/>
<polyline stroke="#775DD0" points="188,829 546,828.3 554.7,812.2 563,817.8 585,819.5 700,820 827.7,819.5 839,812 846.4,798 855.8,773.8 863.7,757.5 866.3,722.4 869.6,700 875.4,667.7 880.6,637.8 883.8,605.4 887.7,583.3 892.3,579.2 898,579.5 900.7,586 906.5,591 910.4,604 914.3,617 920.8,635.2 926,650.8 932.5,663.8 936.4,679.3 940.3,689.7 950.6,696.3 956.5,689.7 962.3,695.5 967.5,712 979.2,725 989.5,732.8 998.6,733.5 1005,740.6 1015.5,745.8 1028.5,751 1040,757.4 1060,759 1073.4,764.6 1082.3,767.3 1095.6,767.3 1106.7,770.2 1129,772.4 1144.6,775.7 1162.4,776.4 1184.6,779.7 1218,783.5 1262.5,786.9 1307,789.5 1351.5,791.3 1415,793.5"/>
<polyline stroke="#008FFB" points="188,837.5 225,837 260,834.5 570,834.5 595,833.8 707.6,831.4 732,827.2 745,823.5 764,819.7 782.6,818.4 848.3,817 867,816.5 880,818.4 888.4,819 906.5,820.4 910.4,806.7 913,767.8 916.2,728.9 918.2,703 920.8,683.2 922.7,663.8 925.3,650.8 928.6,640.4 933.8,627.5 940.3,620.3 946.7,613.8 950.6,614.5 959.7,610 967.5,601.8 972.7,601.5 976.6,600.2 981.8,600.9 989.5,598.7 996,598 1001.2,599 1006.4,602.8 1014.2,605.7 1018.7,606 1025.9,612.5 1032.3,615.8 1040.1,626.2 1051,643.4 1062,655.6 1075.6,674.5 1089,687.9 1102.3,699 1124.5,713.4 1146.8,725.7 1173.5,737.9 1200.2,749 1229,759 1262.5,769 1295.8,776.8 1329.2,783.5 1373.7,789 1415,794"/>
<polyline stroke="#00E396" points="188,846.6 386,846.6 409,844.3 432,838 450,836.5 520,836.6 576,832.9 600.7,824.4 640,826.7 660,829 700,832 720,833.8 830,835.7 839,835 857.7,822.5 861.4,818.8 862.4,812 867.6,797.7 872.8,783.4 878,762.6 881.9,741.9 888.4,731.5 896,723.7 901.3,712 905.2,706.9 913,696.5 915.6,692.6 920.8,688.4 930.5,679.3 935,688.4 940.3,700.4 944,709.5 949.3,718.5 957,726.3 959.7,734 967.5,739.3 976.6,743.2 985.6,751 992,754.9 995.4,739.3 998,752 1000,773 1003.8,782 1007.7,787.3 1012.9,786 1018,780.8 1028.5,786 1040,792.4 1051,798 1064.5,803.5 1077.8,801.3 1095.6,802.9 1115.6,806.9 1124.5,810.2 1146.8,812.4 1170,812.4 1172.8,793.5 1174,776.8 1178,776.4 1181.3,784.6 1189,794.6 1194.6,796.2 1200.2,804.6 1204.6,816.9 1218,818 1240,819.6 1284.7,822.4 1329,824.7 1373.7,826.5 1415,827.6"/>
</g>
<g fill="none" stroke="#6e8192" stroke-width="1.300" stroke-linecap="round">
<circle cx="1300" cy="498.800" r="6.300"/><path d="M1296.700 498.800h6.600M1300 495.500v6.600"/>
<circle cx="1320.200" cy="498.800" r="6.300"/><path d="M1316.900 498.800h6.600"/>
</g>
<g fill="none" stroke="#008ffb" stroke-linecap="round"><circle cx="1341.300" cy="497.400" r="4.700" stroke-width="1.700"/><path d="M1344.900 501l5.300 5.200" stroke-width="2"/><path d="M1339.200 497.400h4.200M1341.300 495.300v4.200" stroke-width="1.100"/></g>
<path d="M1362.500 506c-1.200-1.700-2.600-4-4.700-6.200-.9-1-.1-2.100 1.100-1.500l2.600 2.300v-6.800c0-1.300 1.800-1.300 1.800 0v-1.600c0-1.300 1.900-1.300 1.900 0v-.3c0-1.300 1.900-1.300 1.900 0v1c0-1.200 1.800-1.200 1.800 0v3c.9.600 1.400 1.700 1.400 3.100 0 2.200-.4 4.200-1 5.700-.3.800-.9 1.300-1.700 1.300z" fill="none" stroke="#6e8192" stroke-width="1.200" stroke-linejoin="round"/>
<path d="M1363.300 497.500v-4M1365.200 497.500v-5.500M1367.100 497.500v-5M1368.900 497.500v-3.500" stroke="#6e8192" stroke-width="1"/>
<path d="M1388.500 492l8.200 7.400h-2.300v6.400h-4.100v-4.400h-3.600v4.400h-4.100v-6.400h-2.300z" fill="#6e8192"/>
<path d="M1401 495.400h15.300M1401 499.800h15.300M1401 504.200h15.300" stroke="#6e8192" stroke-width="1.600"/>
</svg>
<div class="t" style="left:21px;width:37.5px;text-align:right;top:360.4px;font-size:11.2px;color:#a9b0b8">7.00</div>
<div class="t" style="left:21px;width:37.5px;text-align:right;top:406.7px;font-size:11.2px;color:#a9b0b8">6.00</div>
<div class="t" style="left:21px;width:37.5px;text-align:right;top:453.0px;font-size:11.2px;color:#a9b0b8">5.00</div>
<div class="t" style="left:21px;width:37.5px;text-align:right;top:499.3px;font-size:11.2px;color:#a9b0b8">4.00</div>
<div class="t" style="left:21px;width:37.5px;text-align:right;top:545.6px;font-size:11.2px;color:#a9b0b8">3.00</div>
<div class="t" style="left:21px;width:37.5px;text-align:right;top:591.9px;font-size:11.2px;color:#a9b0b8">2.00</div>
<div class="t" style="left:21px;width:37.5px;text-align:right;top:638.2px;font-size:11.2px;color:#a9b0b8">1.00</div>
<div class="t" style="left:21px;width:37.5px;text-align:right;top:682.5px;font-size:11.2px;color:#a9b0b8">0.00</div>
<div class="t" style="left:373px;width:120px;text-align:center;top:706.6px;font-size:12.5px;color:#a9b0b8">07 Tem 2024</div>
<div class="t" style="left:920px;width:120px;text-align:center;top:706.6px;font-size:12.5px;color:#a9b0b8">08 Tem 2024</div>
<div class="t" style="left:642px;width:80px;text-align:center;top:724.2px;font-size:11px;font-weight:700;color:#a9aeb5">Tarih</div>
<div class="t" style="left:-30px;width:100px;text-align:center;top:520.5px;font-size:10.6px;font-weight:700;color:#a9aeb5;transform:rotate(-90deg)">Gösterge (m )</div>
<div class="dot" style="left:41.8px;top:744.5px;background:#008FFB"></div><div class="leg" style="left:59.5px;top:743.6px">Terme Çayı Terme Seviye m</div>
<div class="dot" style="left:228.6px;top:744.5px;background:#00E396"></div><div class="leg" style="left:246.3px;top:743.6px">Karakuş Deresi Karacaören Seviye m</div>
<div class="dot" style="left:468.0px;top:744.5px;background:#FEB019"></div><div class="leg" style="left:485.3px;top:743.6px">Terme Çayı Kızılot Yeşildere Köprüsü Seviye m</div>
<div class="dot" style="left:761.0px;top:744.5px;background:#FF4560"></div><div class="leg" style="left:777.7px;top:743.6px">Terme Çayı Salıpazarı Merkez Yeni Köprü Seviye m</div>
<div class="dot" style="left:1078.3px;top:744.5px;background:#775DD0"></div><div class="leg" style="left:1096.0px;top:743.6px">Kızlar Çayı Konakören Seviye m</div>
<div class="dot" style="left:361.0px;top:766.5px;background:#008FFB"></div><div class="leg" style="left:378.7px;top:765.6px">Bolas Çayı Salıpazarı Seviye m</div>
<div class="dot" style="left:564.6px;top:766.5px;background:#00E396"></div><div class="leg" style="left:582.0px;top:765.6px">Terme Çayı Şeyhli Seviye m</div>
<div class="dot" style="left:750.0px;top:766.5px;background:#FEB019"></div><div class="leg" style="left:767.7px;top:765.6px">Terme Çayı Salıpazarı 2 Seviye m</div>
<div class="abs" style="left:0;top:0;width:1320px;height:812px;border:1px solid rgba(255,255,255,.5);border-radius:4px;pointer-events:none"></div>
</div>
<div id="panel">
<div class="t" style="left:16.0px;top:30.2px;font-size:14.18px;font-weight:700;color:#fff;">Eklenen Sensörler</div>
<svg class="abs" style="left:369px;top:25.500px" width="15" height="15" viewBox="0 0 15 15"><path d="M1 1l13 13M14 1L1 14" stroke="#c4c9d0" stroke-width="1.400"/></svg>
<div class="abs" style="left:394px;top:65px;width:5px;height:493px;background:#868789;border-radius:3px 0 0 3px"></div>
<div class="card" style="top:81px"><div class="t" style="left:12.0px;top:21.7px;font-size:15.86px;font-weight:700;color:#343a40;">D22A002</div>
<div class="t" style="left:12.0px;top:49.3px;font-size:11.42px;font-weight:700;color:#343a40;">Terme Çayı Terme Seviye</div>
<div class="t" style="left:12.0px;top:184.3px;font-size:12.96px;font-weight:400;color:#6c757d;">Gösterge</div>
<div class="t" style="left:193.5px;top:184.3px;font-size:12.96px;font-weight:400;color:#6c757d;">Debi</div>
<div class="t" style="left:12.0px;top:203.2px;font-size:13.56px;font-weight:700;color:#3a4047;">0,5652 m</div>
<div class="t" style="left:193.5px;top:203.2px;font-size:13.56px;font-weight:700;color:#3a4047;">2,93 m³</div>
<div class="cb c1"><svg style="margin:-7.500px 0 0 -7.500px" width="15" height="15" viewBox="0 0 15 15" fill="none" stroke="#fff" stroke-width="2.300" stroke-linecap="round" stroke-linejoin="round"><path d="M6.200 2.600H2.400a1.200 1.200 0 0 0-1.200 1.200v8.600a1.200 1.200 0 0 0 1.200 1.200H11a1.200 1.200 0 0 0 1.200-1.200V8.800"/><path d="M9 1.200h4.800V6M13.400 1.600L6 9"/></svg></div><div class="cb c2"><svg style="margin:-7.500px 0 0 -9.500px" width="19" height="15" viewBox="0 0 19 15"><path d="M1.200 7.500C4 2.800 7 2.200 9.500 2.200S15 2.800 17.800 7.500C15 12.200 12 12.800 9.500 12.800S4 12.200 1.200 7.500z" fill="#fff"/><circle cx="9.500" cy="7.500" r="3.100" fill="#6c757d"/><circle cx="9.500" cy="7.500" r="1.500" fill="#fff"/><path d="M1.800 .6l15.400 13.400" stroke="#6c757d" stroke-width="4.400"/><path d="M1.300 1l15.800 13.200" stroke="#fff" stroke-width="1.700" stroke-linecap="round"/></svg></div><div class="cb c3"><svg style="margin:-8.200px 0 0 -6.500px" width="13" height="15" viewBox="0 0 13 15" fill="#fff"><path d="M4.200 0h4.600l.7 1.200H12.600v1.600H.4V1.200H3.500z"/><path d="M1.200 3.800h10.600l-.6 9.800a1.400 1.400 0 0 1-1.400 1.300H3.200a1.400 1.400 0 0 1-1.400-1.300zM3.700 5.600v7.200h.9V5.600zM6.050 5.600v7.200h.9V5.600zM8.400 5.600v7.200h.9V5.600z" fill-rule="evenodd"/></svg></div><div class="cb c4"><svg style="margin:-7px 0 0 -5.500px" width="11" height="14.500" viewBox="0 0 11 14.500" fill="#fff"><path d="M5.500 0A5.500 5.500 0 0 0 0 5.500C0 9.200 5.500 14.500 5.500 14.500S11 9.200 11 5.500A5.500 5.500 0 0 0 5.500 0zm0 7.600a2.100 2.100 0 1 1 0-4.200 2.100 2.100 0 0 1 0 4.200z"/></svg></div></div>
<div class="card" style="top:338.6px"><div class="t" style="left:12.0px;top:21.7px;font-size:15.86px;font-weight:700;color:#343a40;">D22A166</div>
<div class="t" style="left:12.0px;top:49.3px;font-size:11.42px;font-weight:700;color:#343a40;">Karakuş Deresi Karacaören Seviye</div>
<div class="t" style="left:12.0px;top:184.3px;font-size:12.96px;font-weight:400;color:#6c757d;">Gösterge</div>
<div class="t" style="left:193.5px;top:184.3px;font-size:12.96px;font-weight:400;color:#6c757d;">Debi</div>
<div class="t" style="left:12.0px;top:203.2px;font-size:13.56px;font-weight:700;color:#3a4047;">0,42 m</div>
<div class="t" style="left:193.5px;top:203.2px;font-size:13.56px;font-weight:700;color:#3a4047;">0,993 m³</div>
<div class="cb c1"><svg style="margin:-7.500px 0 0 -7.500px" width="15" height="15" viewBox="0 0 15 15" fill="none" stroke="#fff" stroke-width="2.300" stroke-linecap="round" stroke-linejoin="round"><path d="M6.200 2.600H2.400a1.200 1.200 0 0 0-1.200 1.200v8.600a1.200 1.200 0 0 0 1.200 1.200H11a1.200 1.200 0 0 0 1.200-1.200V8.800"/><path d="M9 1.200h4.800V6M13.400 1.600L6 9"/></svg></div><div class="cb c2"><svg style="margin:-7.500px 0 0 -9.500px" width="19" height="15" viewBox="0 0 19 15"><path d="M1.200 7.500C4 2.800 7 2.200 9.500 2.200S15 2.800 17.800 7.500C15 12.200 12 12.800 9.500 12.800S4 12.200 1.200 7.500z" fill="#fff"/><circle cx="9.500" cy="7.500" r="3.100" fill="#6c757d"/><circle cx="9.500" cy="7.500" r="1.500" fill="#fff"/><path d="M1.800 .6l15.400 13.400" stroke="#6c757d" stroke-width="4.400"/><path d="M1.300 1l15.800 13.200" stroke="#fff" stroke-width="1.700" stroke-linecap="round"/></svg></div><div class="cb c3"><svg style="margin:-8.200px 0 0 -6.500px" width="13" height="15" viewBox="0 0 13 15" fill="#fff"><path d="M4.200 0h4.600l.7 1.200H12.600v1.600H.4V1.200H3.500z"/><path d="M1.200 3.800h10.600l-.6 9.800a1.400 1.400 0 0 1-1.400 1.300H3.200a1.400 1.400 0 0 1-1.400-1.300zM3.700 5.600v7.200h.9V5.600zM6.050 5.600v7.200h.9V5.600zM8.400 5.600v7.200h.9V5.600z" fill-rule="evenodd"/></svg></div><div class="cb c4"><svg style="margin:-7px 0 0 -5.500px" width="11" height="14.500" viewBox="0 0 11 14.500" fill="#fff"><path d="M5.500 0A5.500 5.500 0 0 0 0 5.500C0 9.200 5.500 14.500 5.500 14.500S11 9.200 11 5.500A5.500 5.500 0 0 0 5.500 0zm0 7.600a2.100 2.100 0 1 1 0-4.200 2.100 2.100 0 0 1 0 4.200z"/></svg></div></div>
<div class="card" style="top:596.3px"><div class="t" style="left:12.0px;top:21.7px;font-size:15.86px;font-weight:700;color:#343a40;">D22A167</div>
<div class="t" style="left:12.0px;top:49.3px;font-size:11.42px;font-weight:700;color:#343a40;">Terme Çayı Kızılot Yeşildere Köprüsü Seviye</div>
<div class="t" style="left:12.0px;top:184.3px;font-size:12.96px;font-weight:400;color:#6c757d;">Gösterge</div>
<div class="t" style="left:193.5px;top:184.3px;font-size:12.96px;font-weight:400;color:#6c757d;">Debi</div>
<div class="t" style="left:12.0px;top:203.2px;font-size:13.56px;font-weight:700;color:#3a4047;">0,8753 m</div>
<div class="t" style="left:193.5px;top:203.2px;font-size:13.56px;font-weight:700;color:#3a4047;">0,956 m³</div>
<div class="cb c1"><svg style="margin:-7.500px 0 0 -7.500px" width="15" height="15" viewBox="0 0 15 15" fill="none" stroke="#fff" stroke-width="2.300" stroke-linecap="round" stroke-linejoin="round"><path d="M6.200 2.600H2.400a1.200 1.200 0 0 0-1.200 1.200v8.600a1.200 1.200 0 0 0 1.200 1.200H11a1.200 1.200 0 0 0 1.200-1.200V8.800"/><path d="M9 1.200h4.800V6M13.400 1.600L6 9"/></svg></div><div class="cb c2"><svg style="margin:-7.500px 0 0 -9.500px" width="19" height="15" viewBox="0 0 19 15"><path d="M1.200 7.500C4 2.800 7 2.200 9.500 2.200S15 2.800 17.800 7.500C15 12.200 12 12.800 9.500 12.800S4 12.200 1.200 7.500z" fill="#fff"/><circle cx="9.500" cy="7.500" r="3.100" fill="#6c757d"/><circle cx="9.500" cy="7.500" r="1.500" fill="#fff"/><path d="M1.800 .6l15.400 13.400" stroke="#6c757d" stroke-width="4.400"/><path d="M1.300 1l15.800 13.200" stroke="#fff" stroke-width="1.700" stroke-linecap="round"/></svg></div><div class="cb c3"><svg style="margin:-8.200px 0 0 -6.500px" width="13" height="15" viewBox="0 0 13 15" fill="#fff"><path d="M4.200 0h4.600l.7 1.200H12.600v1.600H.4V1.200H3.500z"/><path d="M1.200 3.800h10.600l-.6 9.800a1.400 1.400 0 0 1-1.400 1.300H3.200a1.400 1.400 0 0 1-1.400-1.300zM3.700 5.600v7.200h.9V5.600zM6.050 5.600v7.200h.9V5.600zM8.400 5.600v7.200h.9V5.600z" fill-rule="evenodd"/></svg></div><div class="cb c4"><svg style="margin:-7px 0 0 -5.500px" width="11" height="14.500" viewBox="0 0 11 14.500" fill="#fff"><path d="M5.500 0A5.500 5.500 0 0 0 0 5.500C0 9.200 5.500 14.500 5.500 14.500S11 9.200 11 5.500A5.500 5.500 0 0 0 5.500 0zm0 7.600a2.100 2.100 0 1 1 0-4.200 2.100 2.100 0 0 1 0 4.200z"/></svg></div></div>
<div class="card" style="top:853.3px"><div class="t" style="left:12.0px;top:21.7px;font-size:15.86px;font-weight:700;color:#343a40;">E22A045</div>
<div class="t" style="left:12.0px;top:49.3px;font-size:11.42px;font-weight:700;color:#343a40;">Terme Çayı Salıpazarı Merkez Yeni Köprü Seviye</div>
<div class="t" style="left:12.0px;top:184.3px;font-size:12.96px;font-weight:400;color:#6c757d;">Gösterge</div>
<div class="t" style="left:193.5px;top:184.3px;font-size:12.96px;font-weight:400;color:#6c757d;">Debi</div>
<div class="t" style="left:12.0px;top:203.2px;font-size:13.56px;font-weight:700;color:#3a4047;">0,6088 m</div>
<div class="t" style="left:193.5px;top:203.2px;font-size:13.56px;font-weight:700;color:#3a4047;">2,76 m³</div>
<div class="cb c1"><svg style="margin:-7.500px 0 0 -7.500px" width="15" height="15" viewBox="0 0 15 15" fill="none" stroke="#fff" stroke-width="2.300" stroke-linecap="round" stroke-linejoin="round"><path d="M6.200 2.600H2.400a1.200 1.200 0 0 0-1.200 1.200v8.600a1.200 1.200 0 0 0 1.200 1.200H11a1.200 1.200 0 0 0 1.200-1.200V8.800"/><path d="M9 1.200h4.800V6M13.400 1.600L6 9"/></svg></div><div class="cb c2"><svg style="margin:-7.500px 0 0 -9.500px" width="19" height="15" viewBox="0 0 19 15"><path d="M1.200 7.500C4 2.800 7 2.200 9.500 2.200S15 2.800 17.800 7.500C15 12.200 12 12.800 9.500 12.800S4 12.200 1.200 7.500z" fill="#fff"/><circle cx="9.500" cy="7.500" r="3.100" fill="#6c757d"/><circle cx="9.500" cy="7.500" r="1.500" fill="#fff"/><path d="M1.800 .6l15.400 13.400" stroke="#6c757d" stroke-width="4.400"/><path d="M1.300 1l15.800 13.200" stroke="#fff" stroke-width="1.700" stroke-linecap="round"/></svg></div><div class="cb c3"><svg style="margin:-8.200px 0 0 -6.500px" width="13" height="15" viewBox="0 0 13 15" fill="#fff"><path d="M4.200 0h4.600l.7 1.200H12.600v1.600H.4V1.200H3.500z"/><path d="M1.200 3.800h10.600l-.6 9.800a1.400 1.400 0 0 1-1.400 1.300H3.200a1.400 1.400 0 0 1-1.400-1.300zM3.700 5.600v7.200h.9V5.600zM6.050 5.600v7.200h.9V5.600zM8.400 5.600v7.200h.9V5.600z" fill-rule="evenodd"/></svg></div><div class="cb c4"><svg style="margin:-7px 0 0 -5.500px" width="11" height="14.500" viewBox="0 0 11 14.500" fill="#fff"><path d="M5.500 0A5.500 5.500 0 0 0 0 5.500C0 9.200 5.500 14.500 5.500 14.500S11 9.200 11 5.500A5.500 5.500 0 0 0 5.500 0zm0 7.600a2.100 2.100 0 1 1 0-4.200 2.100 2.100 0 0 1 0 4.200z"/></svg></div></div>
</div>
</body>
</html>
